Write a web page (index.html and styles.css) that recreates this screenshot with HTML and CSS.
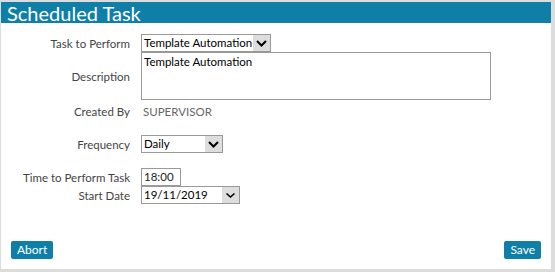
FILE: index.html
```html
<!DOCTYPE html>
<html lang="en">
<head>
    <meta charset="UTF-8">
    <title>Scheduled Task</title>
    <link rel="stylesheet" href="styles.css">
</head>
<body>

<div class="panel">
    <div class="panel-header">Scheduled Task</div>

    <div class="task-form">
        <div class="row">
            <label>Task to Perform</label>
            <div class="select w-task">
                <span class="select-value">Template Automation</span>
                <span class="select-arrow"><svg width="17" height="16" viewBox="0 0 17 16"><polyline points="4,6 8.5,10.5 13,6" fill="none" stroke="#000" stroke-width="2"/></svg></span>
            </div>
        </div>

        <div class="row row-desc">
            <label>Description</label>
            <div class="textarea">Template Automation</div>
        </div>

        <div class="row row-created">
            <label>Created By</label>
            <span class="value">SUPERVISOR</span>
        </div>

        <div class="row row-freq">
            <label>Frequency</label>
            <div class="select w-freq">
                <span class="select-value">Daily</span>
                <span class="select-arrow"><svg width="17" height="16" viewBox="0 0 17 16"><polyline points="4,6 8.5,10.5 13,6" fill="none" stroke="#000" stroke-width="2"/></svg></span>
            </div>
        </div>

        <div class="row row-time">
            <label>Time to Perform Task</label>
            <div class="input w-time">18:00</div>
        </div>

        <div class="row">
            <label>Start Date</label>
            <div class="select w-date">
                <span class="select-value">19/11/2019</span>
                <span class="select-arrow"><svg width="17" height="16" viewBox="0 0 17 16"><polyline points="4.5,6.5 8.5,10 12.5,6.5" fill="none" stroke="#000" stroke-width="1.6"/></svg></span>
            </div>
        </div>
    </div>

    <div class="actions">
        <button class="btn">Abort</button>
        <button class="btn">Save</button>
    </div>
</div>

</body>
</html>
```

FILE: styles.css
```css
html {
    background-color: #dcdcdc;
}
body {
    margin: 2px 0 0 1px;
    font-family: Lato, "Noto Sans", Arial, sans-serif;
    font-size: 11.5px;
    color: #444;
}
.panel {
    width: 550px;
    height: 267px;
    background-color: #fff;
    display: flex;
    flex-direction: column;
}
.panel-header {
    height: 21px;
    background-color: #107fa8;
    color: #fff;
    font-size: 20px;
    line-height: 22px;
    padding-left: 6px;
}
.task-form {
    margin-top: 11px;
    display: flex;
    flex-direction: column;
}
.row {
    display: grid;
    grid-template-columns: 129px auto;
    column-gap: 11px;
    align-items: center;
    justify-items: start;
}
.row label {
    justify-self: end;
}
.row-created {
    height: 22px;
}
.row-freq {
    margin-top: 13px;
}
.row-time {
    margin-top: 15px;
}
.select {
    display: flex;
    height: 16px;
    border: 1px solid #999;
    color: #000;
}
.select-value {
    flex: 1;
    padding-left: 2px;
    line-height: 16px;
    white-space: nowrap;
}
.select-arrow {
    width: 17px;
    height: 16px;
    background-color: #ddd;
}
.select-arrow svg {
    display: block;
}
.w-task { width: 128px; }
.w-freq { width: 80px; }
.w-date { width: 97px; }
.textarea {
    width: 346px;
    height: 44px;
    border: 1px solid #999;
    color: #000;
    padding: 2px 0 0 2px;
    line-height: 14px;
}
.value {
    padding-left: 2px;
    color: #666;
}
.input {
    width: 36px;
    height: 16px;
    line-height: 16px;
    border: 1px solid #999;
    padding-left: 2px;
    color: #222;
}
.actions {
    margin-top: auto;
    margin-bottom: 10px;
    padding: 0 10px;
    display: flex;
    justify-content: space-between;
}
.btn {
    height: 18px;
    padding: 0 6px;
    background-color: #107fa8;
    color: #fff;
    border: none;
    border-radius: 2px;
    font-family: Lato, "Noto Sans", Arial, sans-serif;
    font-size: 12px;
    line-height: 18px;
    cursor: pointer;
}
```
